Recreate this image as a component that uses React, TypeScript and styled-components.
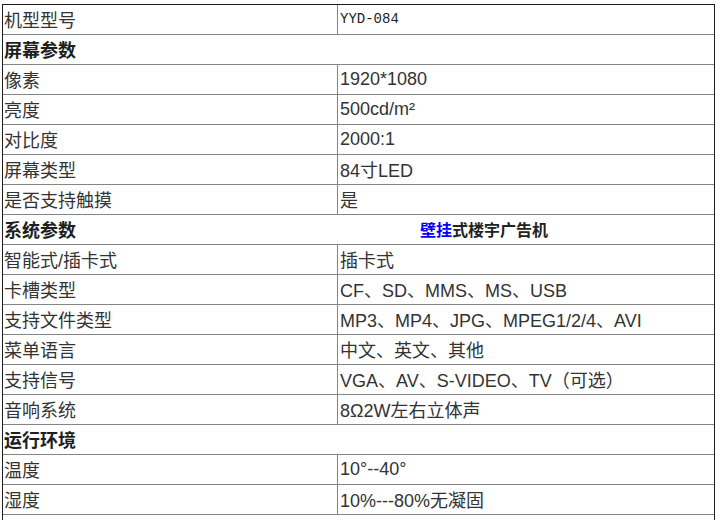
import React from "react";
import styled, { createGlobalStyle } from "styled-components";

const GlobalStyle = createGlobalStyle`
  html, body {
    margin: 0;
    padding: 0;
    background: #fff;
  }
  body {
    font-family: "Liberation Sans", Arial, "Noto Sans CJK SC", sans-serif;
    color: #333;
  }
`;

const Page = styled.div`
  padding: 4px 0 0 2px;
  height: 520px;
  overflow: hidden;
  box-sizing: border-box;
`;

const Table = styled.div`
  width: 713px;
  box-sizing: border-box;
  border: 1px solid #1c1c1c;
  border-bottom: none;
`;

const Row = styled.div<{ $span?: boolean }>`
  display: grid;
  grid-template-columns: ${(p) => (p.$span ? "1fr" : "335px 1fr")};
  height: 30px;
  box-sizing: border-box;
  border-bottom: 1px solid #858585;
`;

const Cell = styled.div<{ $right?: boolean; $mono?: boolean }>`
  display: flex;
  align-items: center;
  padding-left: ${(p) => (p.$right ? "2px" : "1px")};
  padding-bottom: 1px;
  border-right: ${(p) => (p.$right ? "none" : "1px solid #858585")};
  font-size: ${(p) => (p.$mono ? "14px" : "18px")};
  font-family: ${(p) =>
    p.$mono
      ? `"Liberation Mono", "Courier New", "Noto Sans CJK SC", monospace`
      : `"Liberation Sans", Arial, "Noto Sans CJK SC", sans-serif`};
  color: ${(p) => (p.$mono ? "#222" : "#333")};
  white-space: nowrap;
  overflow: hidden;
`;

const Heading = styled.div`
  display: grid;
  grid-template-columns: 335px 1fr;
  align-items: center;
  font-size: 18px;
  font-weight: bold;
  color: #1e1e1e;
  padding-left: 1px;
  padding-bottom: 1px;
`;

const Subtitle = styled.span`
  padding-left: 81px;
  font-size: 16px;
  font-weight: bold;
  color: #222;
`;

const Accent = styled.span`
  color: #0000ff;
`;

type Item =
  | { kind: "pair"; label: string; value: string; mono?: boolean }
  | { kind: "head"; label: string; sub?: React.ReactNode };

const rows: Item[] = [
  { kind: "pair", label: "机型型号", value: "YYD-084", mono: true },
  { kind: "head", label: "屏幕参数" },
  { kind: "pair", label: "像素", value: "1920*1080" },
  { kind: "pair", label: "亮度", value: "500cd/m²" },
  { kind: "pair", label: "对比度", value: "2000:1" },
  { kind: "pair", label: "屏幕类型", value: "84寸LED" },
  { kind: "pair", label: "是否支持触摸", value: "是" },
  {
    kind: "head",
    label: "系统参数",
    sub: (
      <>
        <Accent>壁挂</Accent>式楼宇广告机
      </>
    ),
  },
  { kind: "pair", label: "智能式/插卡式", value: "插卡式" },
  { kind: "pair", label: "卡槽类型", value: "CF、SD、MMS、MS、USB" },
  { kind: "pair", label: "支持文件类型", value: "MP3、MP4、JPG、MPEG1/2/4、AVI" },
  { kind: "pair", label: "菜单语言", value: "中文、英文、其他" },
  { kind: "pair", label: "支持信号", value: "VGA、AV、S-VIDEO、TV（可选）" },
  { kind: "pair", label: "音响系统", value: "8Ω2W左右立体声" },
  { kind: "head", label: "运行环境" },
  { kind: "pair", label: "温度", value: "10°--40°" },
  { kind: "pair", label: "湿度", value: "10%---80%无凝固" },
  { kind: "head", label: "" },
];

export default function App() {
  return (
    <Page>
      <GlobalStyle />
      <Table>
        {rows.map((r, i) =>
          r.kind === "head" ? (
            <Row key={i} $span>
              <Heading>
                <span>{r.label}</span>
                {r.sub ? <Subtitle>{r.sub}</Subtitle> : <span />}
              </Heading>
            </Row>
          ) : (
            <Row key={i}>
              <Cell>{r.label}</Cell>
              <Cell $right $mono={r.mono}>
                {r.value}
              </Cell>
            </Row>
          )
        )}
      </Table>
    </Page>
  );
}
